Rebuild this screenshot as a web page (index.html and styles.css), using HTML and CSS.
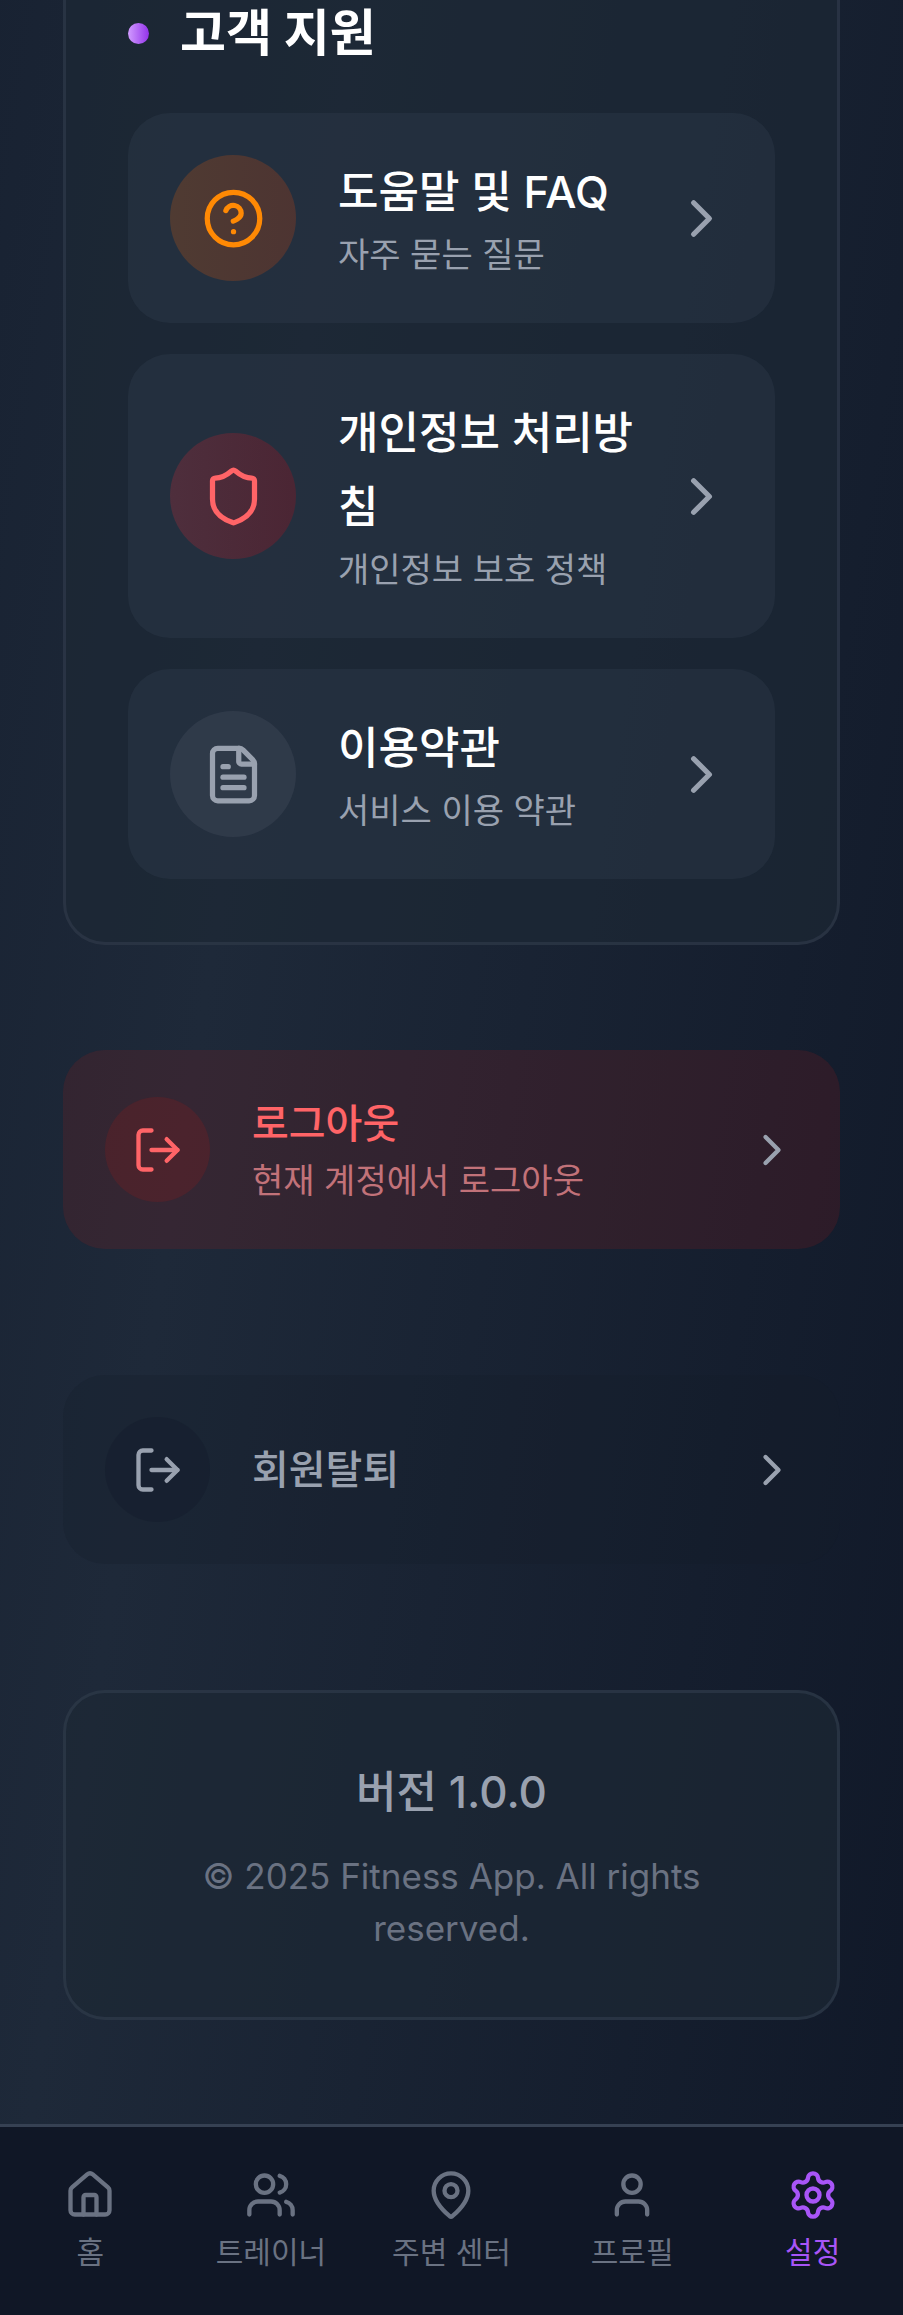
FILE: index.html
```html
<!DOCTYPE html>
<html lang="ko">
<head>
<meta charset="utf-8">
<meta name="viewport" content="width=device-width, initial-scale=1">
<title>설정</title>
<link rel="stylesheet" href="styles.css">
</head>
<body>
<svg class="sprite" aria-hidden="true">
  <symbol id="chevron" viewBox="0 0 24 24"><path d="m9 18 6-6-6-6"/></symbol>
  <symbol id="logout" viewBox="0 0 24 24"><path d="m16 17 5-5-5-5"/><path d="M21 12H9"/><path d="M9 21H5a2 2 0 0 1-2-2V5a2 2 0 0 1 2-2h4"/></symbol>
</svg>

<main class="page">
  <section class="panel support">
    <h2 class="support-title"><span class="dot"></span>고객 지원</h2>
    <div class="rows">
      <button class="row" type="button">
        <span class="badge orange"><svg class="icon" viewBox="0 0 24 24"><circle cx="12" cy="12" r="10"/><path d="M9.09 9a3 3 0 0 1 5.83 1c0 2-3 3-3 3"/><path d="M12 17h.01"/></svg></span>
        <span class="text"><span class="name">도움말 및 FAQ</span><span class="note">자주 묻는 질문</span></span>
        <svg class="icon chevron"><use href="#chevron"/></svg>
      </button>
      <button class="row" type="button">
        <span class="badge red"><svg class="icon" viewBox="0 0 24 24"><path d="M20 13c0 5-3.500 7.500-7.660 8.950a1 1 0 0 1-.67-.01C7.500 20.500 4 18 4 13V6a1 1 0 0 1 1-1c2 0 4.500-1.200 6.240-2.720a1.170 1.170 0 0 1 1.520 0C14.510 3.810 17 5 19 5a1 1 0 0 1 1 1z"/></svg></span>
        <span class="text"><span class="name">개인정보 처리방침</span><span class="note">개인정보 보호 정책</span></span>
        <svg class="icon chevron"><use href="#chevron"/></svg>
      </button>
      <button class="row" type="button">
        <span class="badge gray"><svg class="icon" viewBox="0 0 24 24"><path d="M6 22a2 2 0 0 1-2-2V4a2 2 0 0 1 2-2h8a2.400 2.400 0 0 1 1.704.706l3.588 3.588A2.400 2.400 0 0 1 20 8v12a2 2 0 0 1-2 2z"/><path d="M14 2v5a1 1 0 0 0 1 1h5"/><path d="M10 9H8"/><path d="M16 13H8"/><path d="M16 17H8"/></svg></span>
        <span class="text"><span class="name">이용약관</span><span class="note">서비스 이용 약관</span></span>
        <svg class="icon chevron"><use href="#chevron"/></svg>
      </button>
    </div>
  </section>

  <button class="row account danger" type="button">
    <span class="badge"><svg class="icon"><use href="#logout"/></svg></span>
    <span class="text"><span class="name">로그아웃</span><span class="note">현재 계정에서 로그아웃</span></span>
    <svg class="icon chevron"><use href="#chevron"/></svg>
  </button>

  <button class="row account muted" type="button">
    <span class="badge"><svg class="icon"><use href="#logout"/></svg></span>
    <span class="text"><span class="name">회원탈퇴</span></span>
    <svg class="icon chevron"><use href="#chevron"/></svg>
  </button>

  <footer class="panel about">
    <p class="version">버전 1.0.0</p>
    <p class="copyright">© 2025 Fitness App. All rights reserved.</p>
  </footer>
</main>

<nav class="tabs">
  <a class="tab" href="#home"><svg class="icon" viewBox="0 0 24 24"><path d="M15 21v-8a1 1 0 0 0-1-1h-4a1 1 0 0 0-1 1v8"/><path d="M3 10a2 2 0 0 1 .709-1.528l7-5.999a2 2 0 0 1 2.582 0l7 5.999A2 2 0 0 1 21 10v9a2 2 0 0 1-2 2H5a2 2 0 0 1-2-2z"/></svg>홈</a>
  <a class="tab" href="#trainers"><svg class="icon" viewBox="0 0 24 24"><path d="M16 21v-2a4 4 0 0 0-4-4H6a4 4 0 0 0-4 4v2"/><circle cx="9" cy="7" r="4"/><path d="M22 21v-2a4 4 0 0 0-3-3.870"/><path d="M16 3.130a4 4 0 0 1 0 7.750"/></svg>트레이너</a>
  <a class="tab" href="#centers"><svg class="icon" viewBox="0 0 24 24"><path d="M20 10c0 4.993-5.539 10.193-7.399 11.799a1 1 0 0 1-1.202 0C9.539 20.193 4 14.993 4 10a8 8 0 0 1 16 0"/><circle cx="12" cy="10" r="3"/></svg>주변 센터</a>
  <a class="tab" href="#profile"><svg class="icon" viewBox="0 0 24 24"><path d="M19 21v-2a4 4 0 0 0-4-4H9a4 4 0 0 0-4 4v2"/><circle cx="12" cy="7" r="4"/></svg>프로필</a>
  <a class="tab active" href="#settings" aria-current="page"><svg class="icon" viewBox="0 0 24 24"><path d="M9.671 4.136a2.340 2.340 0 0 1 4.659 0 2.340 2.340 0 0 0 3.319 1.915 2.340 2.340 0 0 1 2.330 4.033 2.340 2.340 0 0 0 0 3.831 2.340 2.340 0 0 1-2.330 4.033 2.340 2.340 0 0 0-3.319 1.915 2.340 2.340 0 0 1-4.659 0 2.340 2.340 0 0 0-3.320-1.915 2.340 2.340 0 0 1-2.330-4.033 2.340 2.340 0 0 0 0-3.831A2.340 2.340 0 0 1 6.350 6.051a2.340 2.340 0 0 0 3.319-1.915"/><circle cx="12" cy="12" r="3"/></svg>설정</a>
</nav>
</body>
</html>
```
FILE: styles.css
```css
* {
  box-sizing: border-box;
}

body {
  margin: 0;
  min-height: 100vh;
  display: flex;
  flex-direction: column;
  font-family: Inter, "Noto Sans CJK KR", sans-serif;
  color: #ffffff;
  background: #101828 linear-gradient(to bottom right, #101828, #1e2939, #101828) bottom / 100% 5800px no-repeat;
}

.sprite {
  display: none;
}

.icon {
  flex: none;
  width: 63px;
  height: 63px;
  fill: none;
  stroke: currentColor;
  stroke-width: 2;
  stroke-linecap: round;
  stroke-linejoin: round;
}

.page {
  flex: 1;
  display: flex;
  flex-direction: column;
  gap: 126px;
  padding: 0 63px 104px;
}

.panel {
  padding: 63px 62px;
  border: 3px solid rgba(54, 65, 83, 0.5);
  border-radius: 42px;
  background: rgba(28, 40, 53, 0.7);
}

.support {
  margin-bottom: -21px;
  padding-top: 0;
  border-top: 0;
  border-radius: 0 0 42px 42px;
}

.support-title {
  display: flex;
  align-items: center;
  gap: 31px;
  margin: 0 0 46px;
  font-size: 50px;
  font-weight: 700;
  line-height: 67px;
}

.dot {
  width: 21px;
  height: 21px;
  border-radius: 50%;
  background: linear-gradient(to right, #d19bff, #9333ea);
}

.rows {
  display: flex;
  flex-direction: column;
  gap: 31px;
}

.row {
  display: flex;
  align-items: center;
  gap: 42px;
  width: 100%;
  padding: 42px;
  border: 0;
  border-radius: 42px;
  font: inherit;
  color: inherit;
  text-align: left;
  background: rgba(54, 65, 83, 0.3);
  cursor: pointer;
}

.badge {
  flex: none;
  display: grid;
  place-items: center;
  width: 126px;
  height: 126px;
  border-radius: 50%;
}

.orange {
  color: #ff8904;
  background: linear-gradient(to right, rgba(255, 105, 0, 0.2), rgba(245, 73, 0, 0.2));
}

.red {
  color: #ff6467;
  background: linear-gradient(to right, rgba(251, 44, 54, 0.2), rgba(231, 0, 11, 0.2));
}

.gray {
  color: #99a1af;
  background: rgba(106, 114, 130, 0.17);
}

.text {
  flex: 1;
  min-width: 0;
  display: flex;
  flex-direction: column;
}

.name {
  font-size: 44px;
  font-weight: 500;
  line-height: 74px;
}

.note {
  font-size: 34px;
  line-height: 52px;
  color: #99a1af;
}

.chevron {
  margin-left: -21px;
  color: #99a1af;
}

.account .badge {
  width: 105px;
  height: 105px;
}

.account .icon {
  width: 52px;
  height: 52px;
}

.account .name {
  font-size: 40px;
  font-weight: 500;
  line-height: 63px;
}

.danger {
  color: #ff6467;
  background: rgba(190, 25, 20, 0.15);
}

.danger .badge {
  background: rgba(200, 20, 11, 0.15);
}

.danger .note {
  color: #c27279;
}

.muted {
  color: #99a1af;
  background: rgba(18, 27, 38, 0.25);
}

.muted .badge {
  background: rgba(16, 24, 40, 0.3);
}

.about {
  text-align: center;
}

.version {
  margin: 0 0 21px;
  font-size: 44px;
  font-weight: 500;
  line-height: 73px;
  color: #99a1af;
}

.copyright {
  margin: 0;
  font-size: 35px;
  line-height: 52px;
  color: #6a7282;
}

.tabs {
  display: grid;
  grid-template-columns: repeat(5, 1fr);
  padding: 42px 0;
  border-top: 3px solid #364153;
  background: #101726;
}

.tab {
  display: flex;
  flex-direction: column;
  align-items: center;
  gap: 10px;
  font-size: 30px;
  line-height: 42px;
  color: #6a7282;
  text-decoration: none;
}

.tab .icon {
  width: 52px;
  height: 52px;
}

.active {
  color: #a855f7;
}
```
